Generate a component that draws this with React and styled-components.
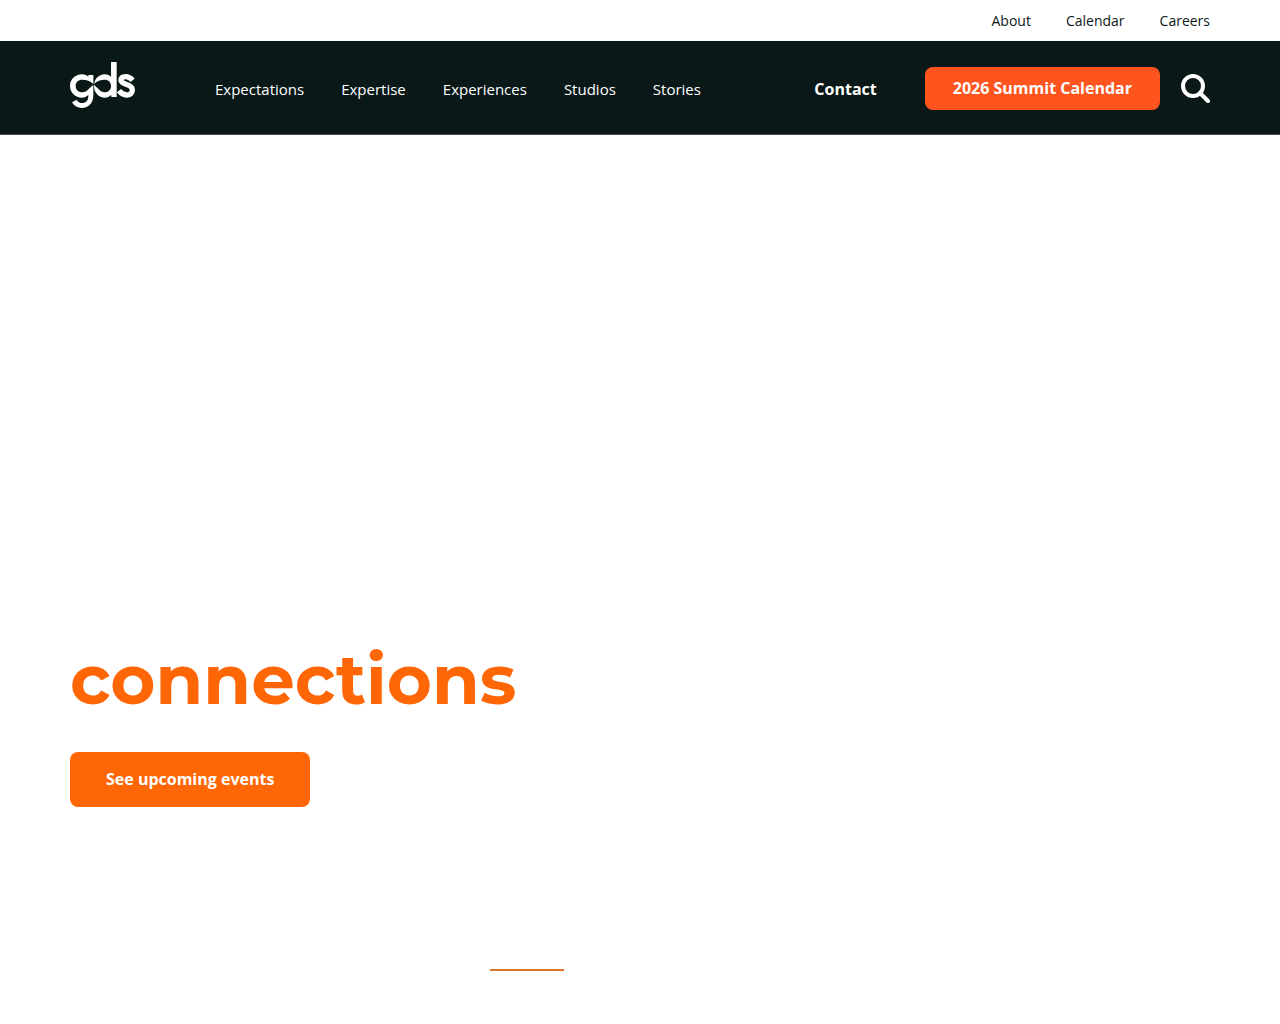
import React from "react";
import styled, { createGlobalStyle } from "styled-components";

const topLinks = ["About", "Calendar", "Careers"];
const navLinks = [
  "Expectations",
  "Expertise",
  "Experiences",
  "Studios",
  "Stories",
];

function Logo() {
  return (
    <svg width="65" height="46" viewBox="30 36 195 138" aria-hidden="true">
      <g fill="#fff" fillRule="evenodd">
        <path d="M85 75 H100 V136 C100 160 85 174 66 174 C52 174 43 168 36 157 L50 149 C54 156 59 159 66 159 C78 159 85 152 85 138 V135 C80 140 73 143 66 143 C46 143 30 128 30 108 C30 88 46 73 66 73 C74 73 81 76 85 80 Z M100 102 C90 92 80 89 67 89 C54 89 47 97 47 108 C47 119 54 127 67 127 C82 127 88 112 100 105 Z" />
        <path d="M153 36 H170 V141 H154 V135 C149 140 142 143 135 143 C116 143 102 128 102 108 C102 88 116 73 135 73 C142 73 149 76 153 80 Z M102 102 C112 92 121 89 134 89 C146 89 153 97 153 108 C153 119 146 127 134 127 C120 127 113 112 102 105 Z" />
      </g>
      <path
        fill="none"
        stroke="#fff"
        strokeWidth="16"
        d="M218 91 C211 83 204 80 197 80 C188 80 183 84 183 91 C183 106 217 99 217 119 C217 130 210 135 200 135 C190 135 183 130 177 122"
      />
    </svg>
  );
}

function SearchIcon() {
  return (
    <svg width="30" height="30" viewBox="0 0 30 30" aria-hidden="true">
      <circle
        cx="13"
        cy="12"
        r="10"
        fill="none"
        stroke="#fff"
        strokeWidth="4"
      />
      <path
        d="M20 19 L28 27"
        stroke="#fff"
        strokeWidth="4"
        strokeLinecap="round"
      />
    </svg>
  );
}

function App() {
  return (
    <>
      <GlobalStyle />
      <TopBar>
        <TopNav aria-label="Secondary">
          {topLinks.map((label) => (
            <TopLink key={label} href="#">
              {label}
            </TopLink>
          ))}
        </TopNav>
      </TopBar>
      <Header>
        <HeaderInner>
          <LogoLink href="#" aria-label="gds">
            <Logo />
          </LogoLink>
          <MainNav aria-label="Main">
            {navLinks.map((label) => (
              <NavLink key={label} href="#">
                {label}
              </NavLink>
            ))}
          </MainNav>
          <Actions>
            <ContactLink href="#">Contact</ContactLink>
            <CalendarLink href="#">2026 Summit Calendar</CalendarLink>
            <SearchButton type="button" aria-label="Search">
              <SearchIcon />
            </SearchButton>
          </Actions>
        </HeaderInner>
      </Header>
      <main>
        <Hero>
          <Title>connections</Title>
          <EventsLink href="#">See upcoming events</EventsLink>
        </Hero>
        <Intro>
          <Divider />
        </Intro>
      </main>
    </>
  );
}

const GlobalStyle = createGlobalStyle`
  * {
    box-sizing: border-box;
  }

  body {
    margin: 0;
    background: #fff;
    color: #0a1817;
    font-family: "Open Sans", sans-serif;
  }

  a {
    color: inherit;
    text-decoration: none;
  }
`;

const Container = styled.div`
  width: 100%;
  max-width: 1180px;
  margin: 0 auto;
  padding: 0 20px;
`;

const TopBar = styled(Container)``;

const TopNav = styled.nav`
  display: flex;
  justify-content: flex-end;
  gap: 35px;
  padding: 11px 0 10px;
`;

const TopLink = styled.a`
  font-size: 14px;
  line-height: 20px;
`;

const Header = styled.header`
  background: #0a1817;
  border-bottom: 1px solid #47524f;
  color: #fff;
`;

const HeaderInner = styled(Container)`
  display: flex;
  align-items: center;
  min-height: 93px;
  padding-top: 21px;
  padding-bottom: 19px;
`;

const LogoLink = styled.a`
  display: flex;
  align-self: flex-start;
  margin-right: 80px;
`;

const MainNav = styled.nav`
  display: flex;
  gap: 37px;
`;

const NavLink = styled.a`
  font-size: 15px;
  line-height: 20px;
`;

const Actions = styled.div`
  display: flex;
  align-items: center;
  margin-left: auto;
`;

const ContactLink = styled.a`
  margin-right: 48px;
  font-size: 16px;
  font-weight: 700;
  line-height: 24px;
`;

const SolidLink = styled.a`
  display: inline-block;
  border-radius: 8px;
  color: #fff;
  font-size: 16px;
  font-weight: 700;
`;

const CalendarLink = styled(SolidLink)`
  padding: 0 28px;
  background: #ff541e;
  line-height: 43px;
`;

const SearchButton = styled.button`
  display: flex;
  margin-left: 20px;
  padding: 0;
  border: 0;
  background: none;
  cursor: pointer;
`;

const Hero = styled(Container)`
  padding-top: 502px;
`;

const Title = styled.h1`
  margin: 0 0 30px;
  color: #ff6606;
  font-family: Montserrat, Inter, sans-serif;
  font-size: 69px;
  font-weight: 700;
  line-height: 85px;
`;

const EventsLink = styled(SolidLink)`
  padding: 0 36px;
  background: #ff6606;
  line-height: 55px;
`;

const Intro = styled(Container)`
  padding-top: 162px;
  padding-bottom: 53px;
`;

const Divider = styled.hr`
  width: 74px;
  height: 2px;
  margin: 0 0 0 420px;
  border: 0;
  background: #d9762b;
`;

export default App;
